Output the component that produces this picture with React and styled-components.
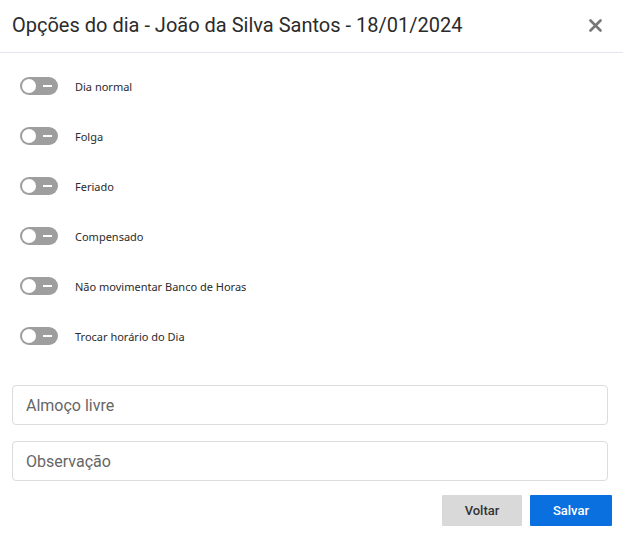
import React, { useState } from 'react';
import styled, { createGlobalStyle } from 'styled-components';

const GlobalStyle = createGlobalStyle`
  html, body {
    margin: 0;
    padding: 0;
    background: #ffffff;
  }
  * {
    box-sizing: border-box;
  }
`;

const Modal = styled.div`
  width: 623px;
  height: 542px;
  background: #fff;
  font-family: Roboto, "Liberation Sans", sans-serif;
  display: flex;
  flex-direction: column;
`;

const Header = styled.div`
  height: 53px;
  display: flex;
  align-items: center;
  justify-content: space-between;
  padding: 0 20px 2px 12px;
  border-bottom: 1px solid #e4e6ee;
`;

const Title = styled.h2`
  margin: 0;
  font-size: 20px;
  font-weight: 400;
  color: #2b2b2b;
`;

const CloseButton = styled.button`
  border: none;
  background: none;
  padding: 0;
  width: 16px;
  height: 16px;
  display: flex;
  align-items: center;
  justify-content: center;
  cursor: pointer;
`;

const Options = styled.div`
  display: flex;
  flex-direction: column;
  gap: 32px;
  padding: 24px 20px 0 20px;
`;

const OptionRow = styled.label`
  display: flex;
  align-items: center;
  gap: 17px;
  height: 18px;
  cursor: pointer;
`;

const Track = styled.span`
  position: relative;
  width: 38px;
  height: 18px;
  border-radius: 9px;
  background: ${p => (p.$on ? '#0a6fdf' : '#9e9e9e')};
  flex-shrink: 0;
`;

const Knob = styled.span`
  position: absolute;
  top: 2px;
  left: ${p => (p.$on ? '22px' : '2px')};
  width: 14px;
  height: 14px;
  border-radius: 50%;
  background: #fff;
`;

const Dash = styled.span`
  position: absolute;
  top: 8px;
  right: 6px;
  width: 9px;
  height: 2px;
  background: #fff;
`;

const OptionLabel = styled.span`
  font-family: "Noto Sans", sans-serif;
  font-size: 11px;
  color: #2b2b2b;
`;

const Fields = styled.div`
  display: flex;
  flex-direction: column;
  gap: 16px;
  padding: 40px 15px 0 12px;
`;

const TextInput = styled.input`
  width: 100%;
  height: 40px;
  border: 1px solid #dcdcdc;
  border-radius: 4px;
  padding: 0 13px;
  font-family: Roboto, sans-serif;
  font-size: 16px;
  color: #333;
  outline: none;

  &::placeholder {
    color: #666;
  }
`;

const Footer = styled.div`
  display: flex;
  justify-content: flex-end;
  gap: 8px;
  padding: 14px 11px 0 0;
`;

const Button = styled.button`
  height: 31px;
  width: ${p => p.$width}px;
  border: none;
  border-radius: 1px;
  font-family: Roboto, sans-serif;
  font-size: 13px;
  font-weight: 500;
  background: ${p => (p.$primary ? '#0a6fdf' : '#d9d9d9')};
  color: ${p => (p.$primary ? '#fff' : '#333')};
  cursor: pointer;
`;

const options = [
  'Dia normal',
  'Folga',
  'Feriado',
  'Compensado',
  'Não movimentar Banco de Horas',
  'Trocar horário do Dia',
];

const App = () => {
  const [checked, setChecked] = useState({});

  return (
    <>
      <GlobalStyle />
      <Modal>
        <Header>
          <Title>Opções do dia - João da Silva Santos - 18/01/2024</Title>
          <CloseButton aria-label="Fechar">
            <svg width="13" height="13" viewBox="0 0 13 13">
              <path d="M1.5 1.5 L11.5 11.5 M11.5 1.5 L1.5 11.5" stroke="#777" strokeWidth="2.6" strokeLinecap="round" />
            </svg>
          </CloseButton>
        </Header>

        <Options>
          {options.map(opt => (
            <OptionRow key={opt} onClick={() => setChecked(c => ({ ...c, [opt]: !c[opt] }))}>
              <Track $on={checked[opt]}>
                <Knob $on={checked[opt]} />
                {!checked[opt] && <Dash />}
              </Track>
              <OptionLabel>{opt}</OptionLabel>
            </OptionRow>
          ))}
        </Options>

        <Fields>
          <TextInput placeholder="Almoço livre" />
          <TextInput placeholder="Observação" />
        </Fields>

        <Footer>
          <Button $width={80}>Voltar</Button>
          <Button $width={82} $primary>Salvar</Button>
        </Footer>
      </Modal>
    </>
  );
};

export default App;
